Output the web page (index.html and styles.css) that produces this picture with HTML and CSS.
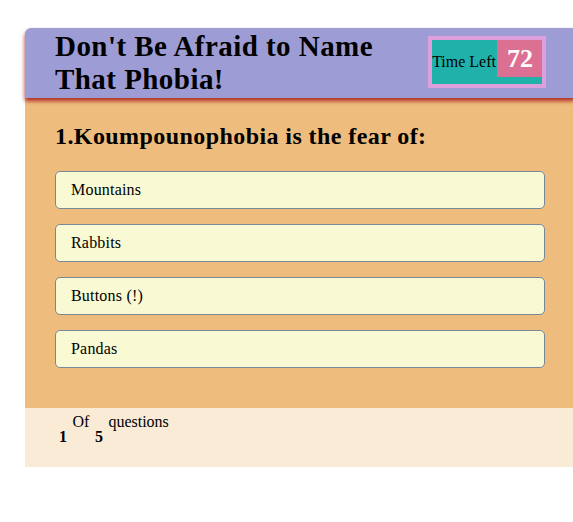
FILE: index.html
```html
<!DOCTYPE html>
<html>
<head>
<meta charset="utf-8">
<link rel="stylesheet" href="styles.css">
</head>
<body>
<div class="quiz">
  <header class="top">
    <h1 class="title">Don't Be Afraid to Name That Phobia!</h1>
    <div class="timer">Time Left <span class="secs">72</span></div>
  </header>
  <section class="panel">
    <h2 class="question">1.Koumpounophobia is the fear of:</h2>
    <div class="options">
      <div class="option">Mountains</div>
      <div class="option">Rabbits</div>
      <div class="option">Buttons (!)</div>
      <div class="option">Pandas</div>
    </div>
  </section>
  <footer class="foot">
    <span class="num">1</span> Of <span class="num">5</span> questions
  </footer>
</div>
</body>
</html>
```
FILE: styles.css
```css
html, body {
  overflow-x: hidden;
}
body {
  margin: 0;
  font-family: "Liberation Serif", "Times New Roman", serif;
  font-size: 16px;
  color: #000;
  background: #fff;
}
.quiz {
  width: 550px;
  margin: 28px 0 0 25px;
}
.top {
  position: relative;
  z-index: 1;
  display: flex;
  align-items: center;
  height: 70px;
  box-sizing: border-box;
  padding: 0 29px 0 30px;
  background: #9e9cd4;
  border-top-left-radius: 6px;
  box-shadow: 0 3px 4px rgba(165, 25, 25, 0.9);
}
.title {
  margin: 0;
  max-width: 370px;
  font-size: 29px;
  font-weight: bold;
  line-height: 33.3px;
  letter-spacing: 0.45px;
}
.timer {
  margin-left: auto;
  display: flex;
  align-items: baseline;
  border: 4px solid #dda0dd;
  background: #20b2aa;
  padding-bottom: 7px;
  margin-top: -2px;
}
.secs {
  margin-left: 1px;
  background: #db7093;
  color: #fff;
  font-weight: bold;
  font-size: 26px;
  line-height: 29px;
  padding: 4px 9px 4px 10px;
}
.panel {
  background: #eebd7e;
  padding: 25px 30px 40px 30px;
}
.question {
  margin: 0 0 20px 0;
  font-size: 24px;
  font-weight: bold;
  line-height: 27.6px;
  letter-spacing: 0.42px;
}
.options {
  display: flex;
  flex-direction: column;
  gap: 15px;
}
.option {
  height: 38px;
  box-sizing: border-box;
  display: flex;
  align-items: center;
  padding-left: 15px;
  border: 1px solid #778899;
  border-radius: 5px;
  background: #f9f9d3;
  letter-spacing: 0.2px;
}
.foot {
  height: 59px;
  box-sizing: border-box;
  padding: 5px 0 0 34px;
  background: #faebd7;
  line-height: 18.4px;
  word-spacing: 1.5px;
}
.num {
  font-weight: bold;
  vertical-align: -15px;
}
```
